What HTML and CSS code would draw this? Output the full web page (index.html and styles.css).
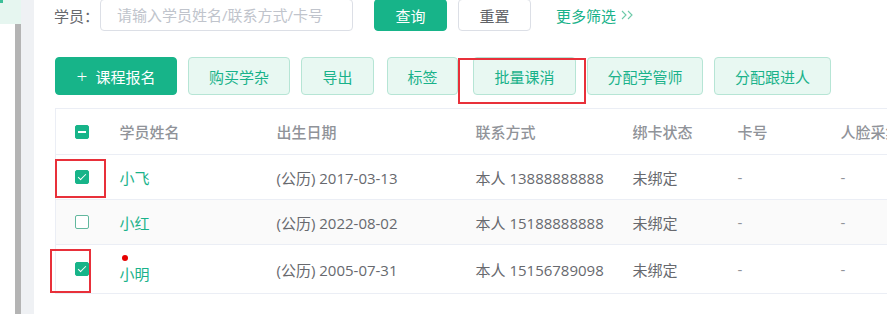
FILE: index.html
```html
<!DOCTYPE html>
<html lang="zh-CN">
<head>
  <meta charset="UTF-8" />
  <title>学员列表</title>
  <link rel="stylesheet" href="styles.css">
</head>
<body>
  <aside class="sidebar">
    <div class="sidebar-item"><span class="sidebar-icon"></span></div>
    <div class="sidebar-rest"></div>
  </aside>
  <div class="gutter"></div>

  <main class="main">
    <div class="filter">
      <label class="filter-label">学员：</label>
      <div class="filter-input">请输入学员姓名/联系方式/卡号</div>
      <button class="btn btn-primary btn-small btn-query">查询</button>
      <button class="btn btn-plain btn-small">重置</button>
      <a class="more-link">更多筛选
        <svg width="13" height="10" viewBox="0 0 13 10"><path d="M1 1l4 4-4 4M7 1l4 4-4 4" fill="none" stroke="#6ccaa9" stroke-width="1.1"/></svg>
      </a>
    </div>

    <div class="actions">
      <button class="btn btn-primary btn-enroll"><span class="plus">+</span>课程报名</button>
      <button class="btn btn-light w-102">购买学杂</button>
      <button class="btn btn-light w-73">导出</button>
      <button class="btn btn-light w-71 gap-wide">标签</button>
      <button class="btn btn-light w-103 gap-wider">批量课消</button>
      <button class="btn btn-light w-116">分配学管师</button>
      <button class="btn btn-light w-117">分配跟进人</button>
    </div>

    <table class="students">
      <colgroup>
        <col style="width:50px"><col style="width:157px"><col style="width:199px"><col style="width:157px"><col style="width:105px"><col style="width:103px"><col style="width:140px">
      </colgroup>
      <thead>
        <tr>
          <th><span class="check check-half"></span></th>
          <th>学员姓名</th>
          <th>出生日期</th>
          <th>联系方式</th>
          <th>绑卡状态</th>
          <th>卡号</th>
          <th>人脸采集</th>
        </tr>
      </thead>
      <tbody>
        <tr>
          <td><span class="check check-on"></span></td>
          <td class="name">小飞</td>
          <td>(公历) 2017-03-13</td>
          <td>本人 13888888888</td>
          <td>未绑定</td>
          <td class="dash">-</td>
          <td class="dash">-</td>
        </tr>
        <tr class="striped">
          <td><span class="check"></span></td>
          <td class="name">小红</td>
          <td>(公历) 2022-08-02</td>
          <td>本人 15188888888</td>
          <td>未绑定</td>
          <td class="dash">-</td>
          <td class="dash">-</td>
        </tr>
        <tr class="tall">
          <td><span class="check check-on"></span></td>
          <td class="name"><span class="dot"></span>小明</td>
          <td>(公历) 2005-07-31</td>
          <td>本人 15156789098</td>
          <td>未绑定</td>
          <td class="dash">-</td>
          <td class="dash">-</td>
        </tr>
      </tbody>
    </table>
  </main>

  <!-- annotation boxes drawn over the screenshot -->
  <div class="mark mark-batch"></div>
  <div class="mark mark-row1"></div>
  <div class="mark mark-row3"></div>
</body>
</html>
```

FILE: styles.css
```css
html, body {
  margin: 0;
  height: 100%;
  overflow: hidden;
  font-family: "Open Sans", "Noto Sans CJK SC", sans-serif;
  font-size: 15px;
  color: #67696e;
}

body {
  display: flex;
  background: #fff;
}

.sidebar {
  width: 21px;
  display: flex;
  flex-direction: column;
}

.sidebar-item {
  height: 24px;
  background: #e6f6f0;
  position: relative;
}

.sidebar-icon {
  position: absolute;
  top: 0;
  left: 0;
  width: 3px;
  height: 3px;
  background: #3cbf98;
}

.sidebar-rest {
  flex: 1;
  background: #fff;
  border-right: 6px solid #b4b4b4;
}

.gutter {
  width: 13px;
  background: #eff1f4;
}

.main {
  flex: 1;
  padding-left: 21px;
  overflow: hidden;
}

/* filter row */
.filter {
  display: flex;
  align-items: center;
  height: 32px;
  margin-top: -1px;
}

.filter-label {
  width: 46px;
  margin-left: -1px;
}

.filter-input {
  box-sizing: border-box;
  width: 253px;
  height: 32px;
  line-height: 30px;
  padding-left: 16px;
  border: 1px solid #dcdfe6;
  border-radius: 4px;
  color: #c0c4cc;
  white-space: nowrap;
  overflow: hidden;
}

.btn {
  box-sizing: border-box;
  font-family: inherit;
  font-size: 15px;
  border-radius: 4px;
  padding: 0;
  height: 38px;
  cursor: pointer;
  white-space: nowrap;
}

.btn-small {
  height: 32px;
  width: 73px;
}

.btn-query {
  margin-left: 21px;
  margin-right: 11px;
}

.btn-primary {
  background: #17b489;
  border: 1px solid #17b489;
  color: #fff;
}

.btn-plain {
  background: #fff;
  border: 1px solid #dcdfe6;
  color: #606266;
}

.btn-light {
  background: #e8f8f2;
  border: 1px solid #b6e5d5;
  color: #19b28a;
}

.w-71 { width: 71px; }
.w-73 { width: 73px; }
.w-102 { width: 102px; }
.w-103 { width: 103px; }
.w-116 { width: 116px; }
.w-117 { width: 117px; }

.more-link {
  margin-left: 25px;
  color: #19b28a;
  display: flex;
  align-items: center;
  gap: 5px;
}

/* action buttons */
.actions {
  display: flex;
  gap: 11px;
  margin-top: 26px;
}

.btn-enroll {
  width: 122px;
  display: flex;
  align-items: center;
  justify-content: center;
}

.plus {
  font-size: 19px;
  font-weight: 300;
  margin-right: 8px;
  line-height: 1;
}

.gap-wide {
  margin-left: 2px;
}

.gap-wider {
  margin-left: 4px;
}

/* table */
.students {
  margin-top: 13px;
  border-collapse: collapse;
  table-layout: fixed;
  width: 911px;
  border-top: 1px solid #ebeef5;
  border-left: 1px solid #ebeef5;
}

.students th,
.students td {
  text-align: left;
  padding: 0 0 0 14px;
  border-bottom: 1px solid #ebeef5;
  white-space: nowrap;
}

.students th {
  height: 45px;
  color: #909399;
  font-weight: 500;
}

.students td {
  height: 44px;
}

.students th:first-child,
.students td:first-child {
  padding-left: 19px;
}

.students tr.striped td {
  background: #fafafa;
}

.students tr.tall td {
  height: 48px;
}

.name {
  color: #19b28a;
}

.dash {
  color: #909399;
}

.dot {
  display: block;
  width: 6px;
  height: 6px;
  border-radius: 50%;
  background: #e60000;
  margin: 0 0 2px 2px;
}

.check {
  display: block;
  box-sizing: border-box;
  width: 14px;
  height: 14px;
  border: 1px solid #62b89e;
  border-radius: 2px;
  background: #fff;
  position: relative;
}

.check-on,
.check-half {
  background: #17b489;
  border-color: #17b489;
}

.check-on::after {
  content: "";
  position: absolute;
  left: 4px;
  top: 1px;
  width: 3px;
  height: 7px;
  border: 1px solid #fff;
  border-top: 0;
  border-left: 0;
  transform: rotate(45deg);
}

.check-half::after {
  content: "";
  position: absolute;
  left: 2px;
  right: 2px;
  top: 5px;
  height: 2px;
  background: #fff;
}

/* red annotation boxes */
.mark {
  position: absolute;
  border: 2px solid #e8303a;
  box-sizing: border-box;
}

.mark-batch {
  left: 458px;
  top: 58px;
  width: 128px;
  height: 46px;
}

.mark-row1 {
  left: 55px;
  top: 159px;
  width: 51px;
  height: 39px;
}

.mark-row3 {
  left: 50px;
  top: 249px;
  width: 41px;
  height: 44px;
}
```
